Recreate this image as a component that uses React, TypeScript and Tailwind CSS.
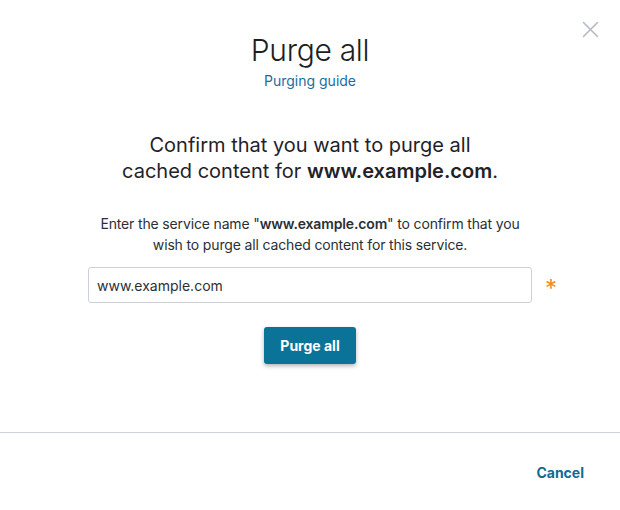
import React from "react";

export default function App() {
  return (
    <div className="w-[620px] h-[510px] bg-white flex flex-col relative text-[#1f2329]" style={{ fontFamily: "Inter, 'Noto Sans', sans-serif" }}>
      <button className="absolute top-[21px] right-[21px] w-[17px] h-[17px] text-[#b5bcc6]" aria-label="Close">
        <svg viewBox="0 0 17 17" width="17" height="17" fill="none" stroke="currentColor" strokeWidth="1.6" strokeLinecap="round">
          <path d="M1.5 1.5 L15.5 15.5 M15.5 1.5 L1.5 15.5" />
        </svg>
      </button>
      <div className="h-[432px] flex flex-col items-center pt-[30px]">
        <h1 className="text-[30px] leading-[40px] tracking-[-0.3px] font-light text-[#1b1f24]">Purge all</h1>
        <a className="mt-[1px] text-[14px] leading-[20px] text-[#1b6d9d]">Purging guide</a>
        <h2 className="mt-[41px] text-[20px] leading-[26px] text-center text-[#1f2329]">
          Confirm that you want to purge all
          <br />
          cached content for <span className="font-semibold">www.example.com</span>.
        </h2>
        <p className="mt-[29px] text-[14px] leading-[21px] tracking-[-0.15px] text-center text-[#2b2f35]">
          Enter the service name "<span className="font-semibold">www.example.com</span>" to confirm that you
          <br />
          wish to purge all cached content for this service.
        </p>
        <div className="mt-[12px] w-full flex items-center pl-[88px]">
          <input
            className="w-[444px] h-[36px] border border-[#ccd2da] rounded-[3px] px-[8px] text-[14px] text-[#2b2f35] outline-none"
            defaultValue="www.example.com"
          />
          <span className="ml-[13px] text-[#f08a24] text-[24px] leading-none mt-[8px]">*</span>
        </div>
        <button className="mt-[24px] h-[37px] px-[16px] rounded-[3px] bg-[#0b7397] text-white text-[14px] font-bold shadow-[0_2px_4px_rgba(0,0,0,0.3)]">
          Purge all
        </button>
      </div>
      <div className="border-t border-[#ccd3db] flex-1 flex items-center justify-end pr-[36px]">
        <button className="text-[14px] font-bold text-[#0e6b98] mt-[1px]">Cancel</button>
      </div>
    </div>
  );
}
